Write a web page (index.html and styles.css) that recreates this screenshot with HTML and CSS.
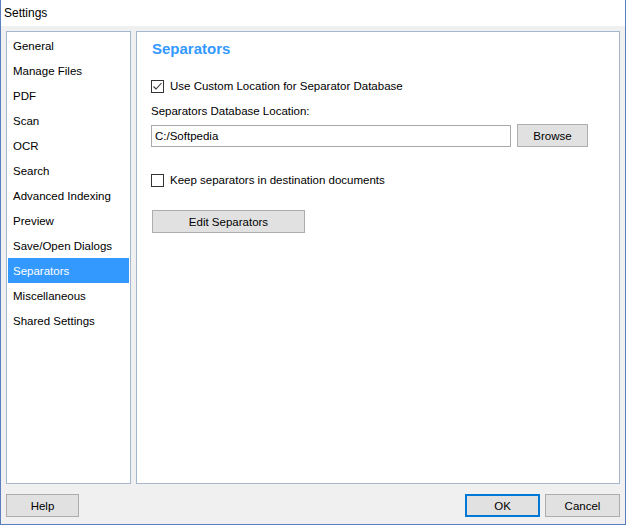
FILE: index.html
```html
<!DOCTYPE html>
<html lang="en">
<head>
  <meta charset="UTF-8" />
  <title>Settings</title>
  <link rel="stylesheet" href="styles.css">
</head>
<body>
  <div class="window">
    <div class="titlebar">Settings</div>

    <div class="content">
      <div class="panels">
        <!-- Lista de secciones -->
        <ul class="nav">
          <li>General</li>
          <li>Manage Files</li>
          <li>PDF</li>
          <li>Scan</li>
          <li>OCR</li>
          <li>Search</li>
          <li>Advanced Indexing</li>
          <li>Preview</li>
          <li>Save/Open Dialogs</li>
          <li class="active">Separators</li>
          <li>Miscellaneous</li>
          <li>Shared Settings</li>
        </ul>

        <!-- Pagina de separadores -->
        <div class="page">
          <h2>Separators</h2>

          <label class="check first">
            <span class="box">
              <svg width="11" height="11" viewBox="0 0 11 11"><polyline points="1.5,5.5 4,8 9.5,2" fill="none" stroke="#333" stroke-width="1.1"/></svg>
            </span>
            Use Custom Location for Separator Database
          </label>

          <div class="field-label">Separators Database Location:</div>
          <div class="path-row">
            <div class="path-input">C:/Softpedia</div>
            <button class="btn browse">Browse</button>
          </div>

          <label class="check second">
            <span class="box"></span>
            Keep separators in destination documents
          </label>

          <button class="btn edit">Edit Separators</button>
        </div>
      </div>

      <div class="footer">
        <button class="btn help">Help</button>
        <div class="spacer"></div>
        <button class="btn ok">OK</button>
        <button class="btn cancel">Cancel</button>
      </div>
    </div>
  </div>
</body>
</html>
```

FILE: styles.css
```css
* {
  box-sizing: border-box;
}

body {
  margin: 0;
  font-family: 'Liberation Sans', Arial, sans-serif;
  font-size: 11.5px;
  color: #000;
  background: #f0f0f0;
}

.window {
  width: 626px;
  height: 525px;
  border: 1px solid #5a7fc1;
  border-top: none;
  background: #f0f0f0;
  display: flex;
  flex-direction: column;
}

.titlebar {
  height: 26px;
  line-height: 26px;
  padding-left: 3px;
  background: #fff;
  font-size: 12px;
}

.content {
  flex: 1;
  padding: 5px 5px 0 5px;
  display: flex;
  flex-direction: column;
}

.panels {
  height: 453px;
  display: flex;
  gap: 5px;
}

/* Lista de la izquierda */
.nav {
  width: 125px;
  margin: 0;
  padding: 1px;
  list-style: none;
  background: #fff;
  border: 1px solid #a5b6cf;
}

.nav li {
  height: 25px;
  line-height: 26px;
  padding-left: 5px;
}

.nav li.active {
  background: #3399ff;
  color: #fff;
}

/* Panel derecho */
.page {
  flex: 1;
  background: #fff;
  border: 1px solid #a5b6cf;
  padding: 8px 14px 0 14px;
}

.page h2 {
  margin: 0 0 0 1px;
  height: 18px;
  line-height: 18px;
  font-size: 15px;
  font-weight: bold;
  color: #3399ff;
}

.check {
  display: flex;
  align-items: center;
  height: 18px;
  gap: 6px;
}

.check.first {
  margin-top: 19px;
}

.check.second {
  margin-top: 24px;
}

.box {
  width: 13px;
  height: 13px;
  border: 1px solid #333;
  background: #fff;
  display: flex;
}

.field-label {
  margin-top: 7px;
  height: 18px;
  line-height: 18px;
}

.path-row {
  margin-top: 4px;
  display: flex;
  align-items: center;
  gap: 6px;
}

.path-input {
  width: 360px;
  height: 22px;
  line-height: 20px;
  padding-left: 3px;
  border: 1px solid #a9a9a9;
  background: #fff;
}

.btn {
  height: 23px;
  padding: 0;
  font-family: 'Liberation Sans', Arial, sans-serif;
  font-size: 11.5px;
  color: #000;
  background: #e1e1e1;
  border: 1px solid #adadad;
}

.browse {
  width: 71px;
}

.edit {
  display: block;
  width: 153px;
  margin: 21px 0 0 1px;
}

/* Botones de abajo */
.footer {
  display: flex;
  padding-top: 10px;
  gap: 5px;
}

.spacer {
  flex: 1;
}

.help {
  width: 73px;
}

.ok,
.cancel {
  width: 75px;
}

.ok {
  border: 2px solid #0078d7;
}
```
